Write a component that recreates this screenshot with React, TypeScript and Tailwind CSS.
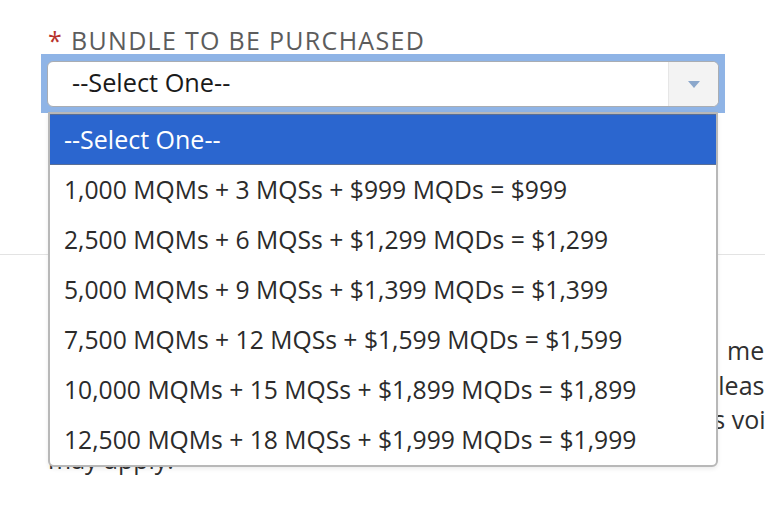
import React from "react";

const options = [
  "1,000 MQMs + 3 MQSs + $999 MQDs = $999",
  "2,500 MQMs + 6 MQSs + $1,299 MQDs = $1,299",
  "5,000 MQMs + 9 MQSs + $1,399 MQDs = $1,399",
  "7,500 MQMs + 12 MQSs + $1,599 MQDs = $1,599",
  "10,000 MQMs + 15 MQSs + $1,899 MQDs = $1,899",
  "12,500 MQMs + 18 MQSs + $1,999 MQDs = $1,999",
];

export default function App() {
  return (
    <div
      className="relative w-[765px] h-[516px] overflow-hidden bg-white text-[#333]"
      style={{ fontFamily: '"Open Sans", "Liberation Sans", sans-serif' }}
    >
      <div className="pl-[48px] pt-[24px]">
        <label className="flex items-center gap-[8px] text-[25px] leading-[32px] font-medium text-[#5c5c5c] tracking-[1.3px]">
          <span className="text-[#b8322b]">*</span>
          <span>BUNDLE TO BE PURCHASED</span>
        </label>
      </div>
      <div className="ml-[41px] mt-[-2px] w-[684px] bg-[#8fb4e6] px-[6px] pt-[7px] pb-[6px]">
        <div className="flex h-[46px] items-stretch rounded-[6px] border border-[#a9adb3] bg-white">
          <div className="flex flex-1 items-center pl-[24px] pb-[2px] text-[25.3px] font-medium text-[#1a1a1a]">--Select One--</div>
          <div className="flex w-[50px] items-center justify-center rounded-r-[6px] border-l border-[#e6e6e6] bg-[#f3f3f3]">
            <svg width="12" height="7" viewBox="0 0 12 7">
              <path d="M0 0 L12 0 L6 7 Z" fill="#8ba7cb" />
            </svg>
          </div>
        </div>
      </div>

      <div className="mt-[141px] h-[1px] w-full bg-[#e3e3e3]" />
      <div className="pt-[78px] text-[25px] leading-[34.5px] text-[#2f2f2f]">
        <p className="whitespace-nowrap pl-[727px]">membership</p>
        <p className="whitespace-nowrap pl-[703px]">please</p>
        <p className="whitespace-nowrap pl-[707px]">is voided</p>
        <p className="whitespace-nowrap pl-[48px] pt-[5px]">may apply.</p>
      </div>

      <ul className="absolute left-[48px] top-[112px] w-[670px] overflow-hidden rounded-b-[6px] border-2 border-[#b8b8b8] bg-white shadow-[0_2px_4px_rgba(0,0,0,0.08)]">
        <li className="flex h-[51px] items-center border-y border-[#5a6f95] bg-[#2b66cf] pl-[14px] text-[25px] text-white">
          --Select One--
        </li>
        {options.map((o) => (
          <li key={o} className="flex h-[50px] items-center pl-[14px] text-[24.7px] text-[#2b2b2b]">
            {o}
          </li>
        ))}
      </ul>
    </div>
  );
}
